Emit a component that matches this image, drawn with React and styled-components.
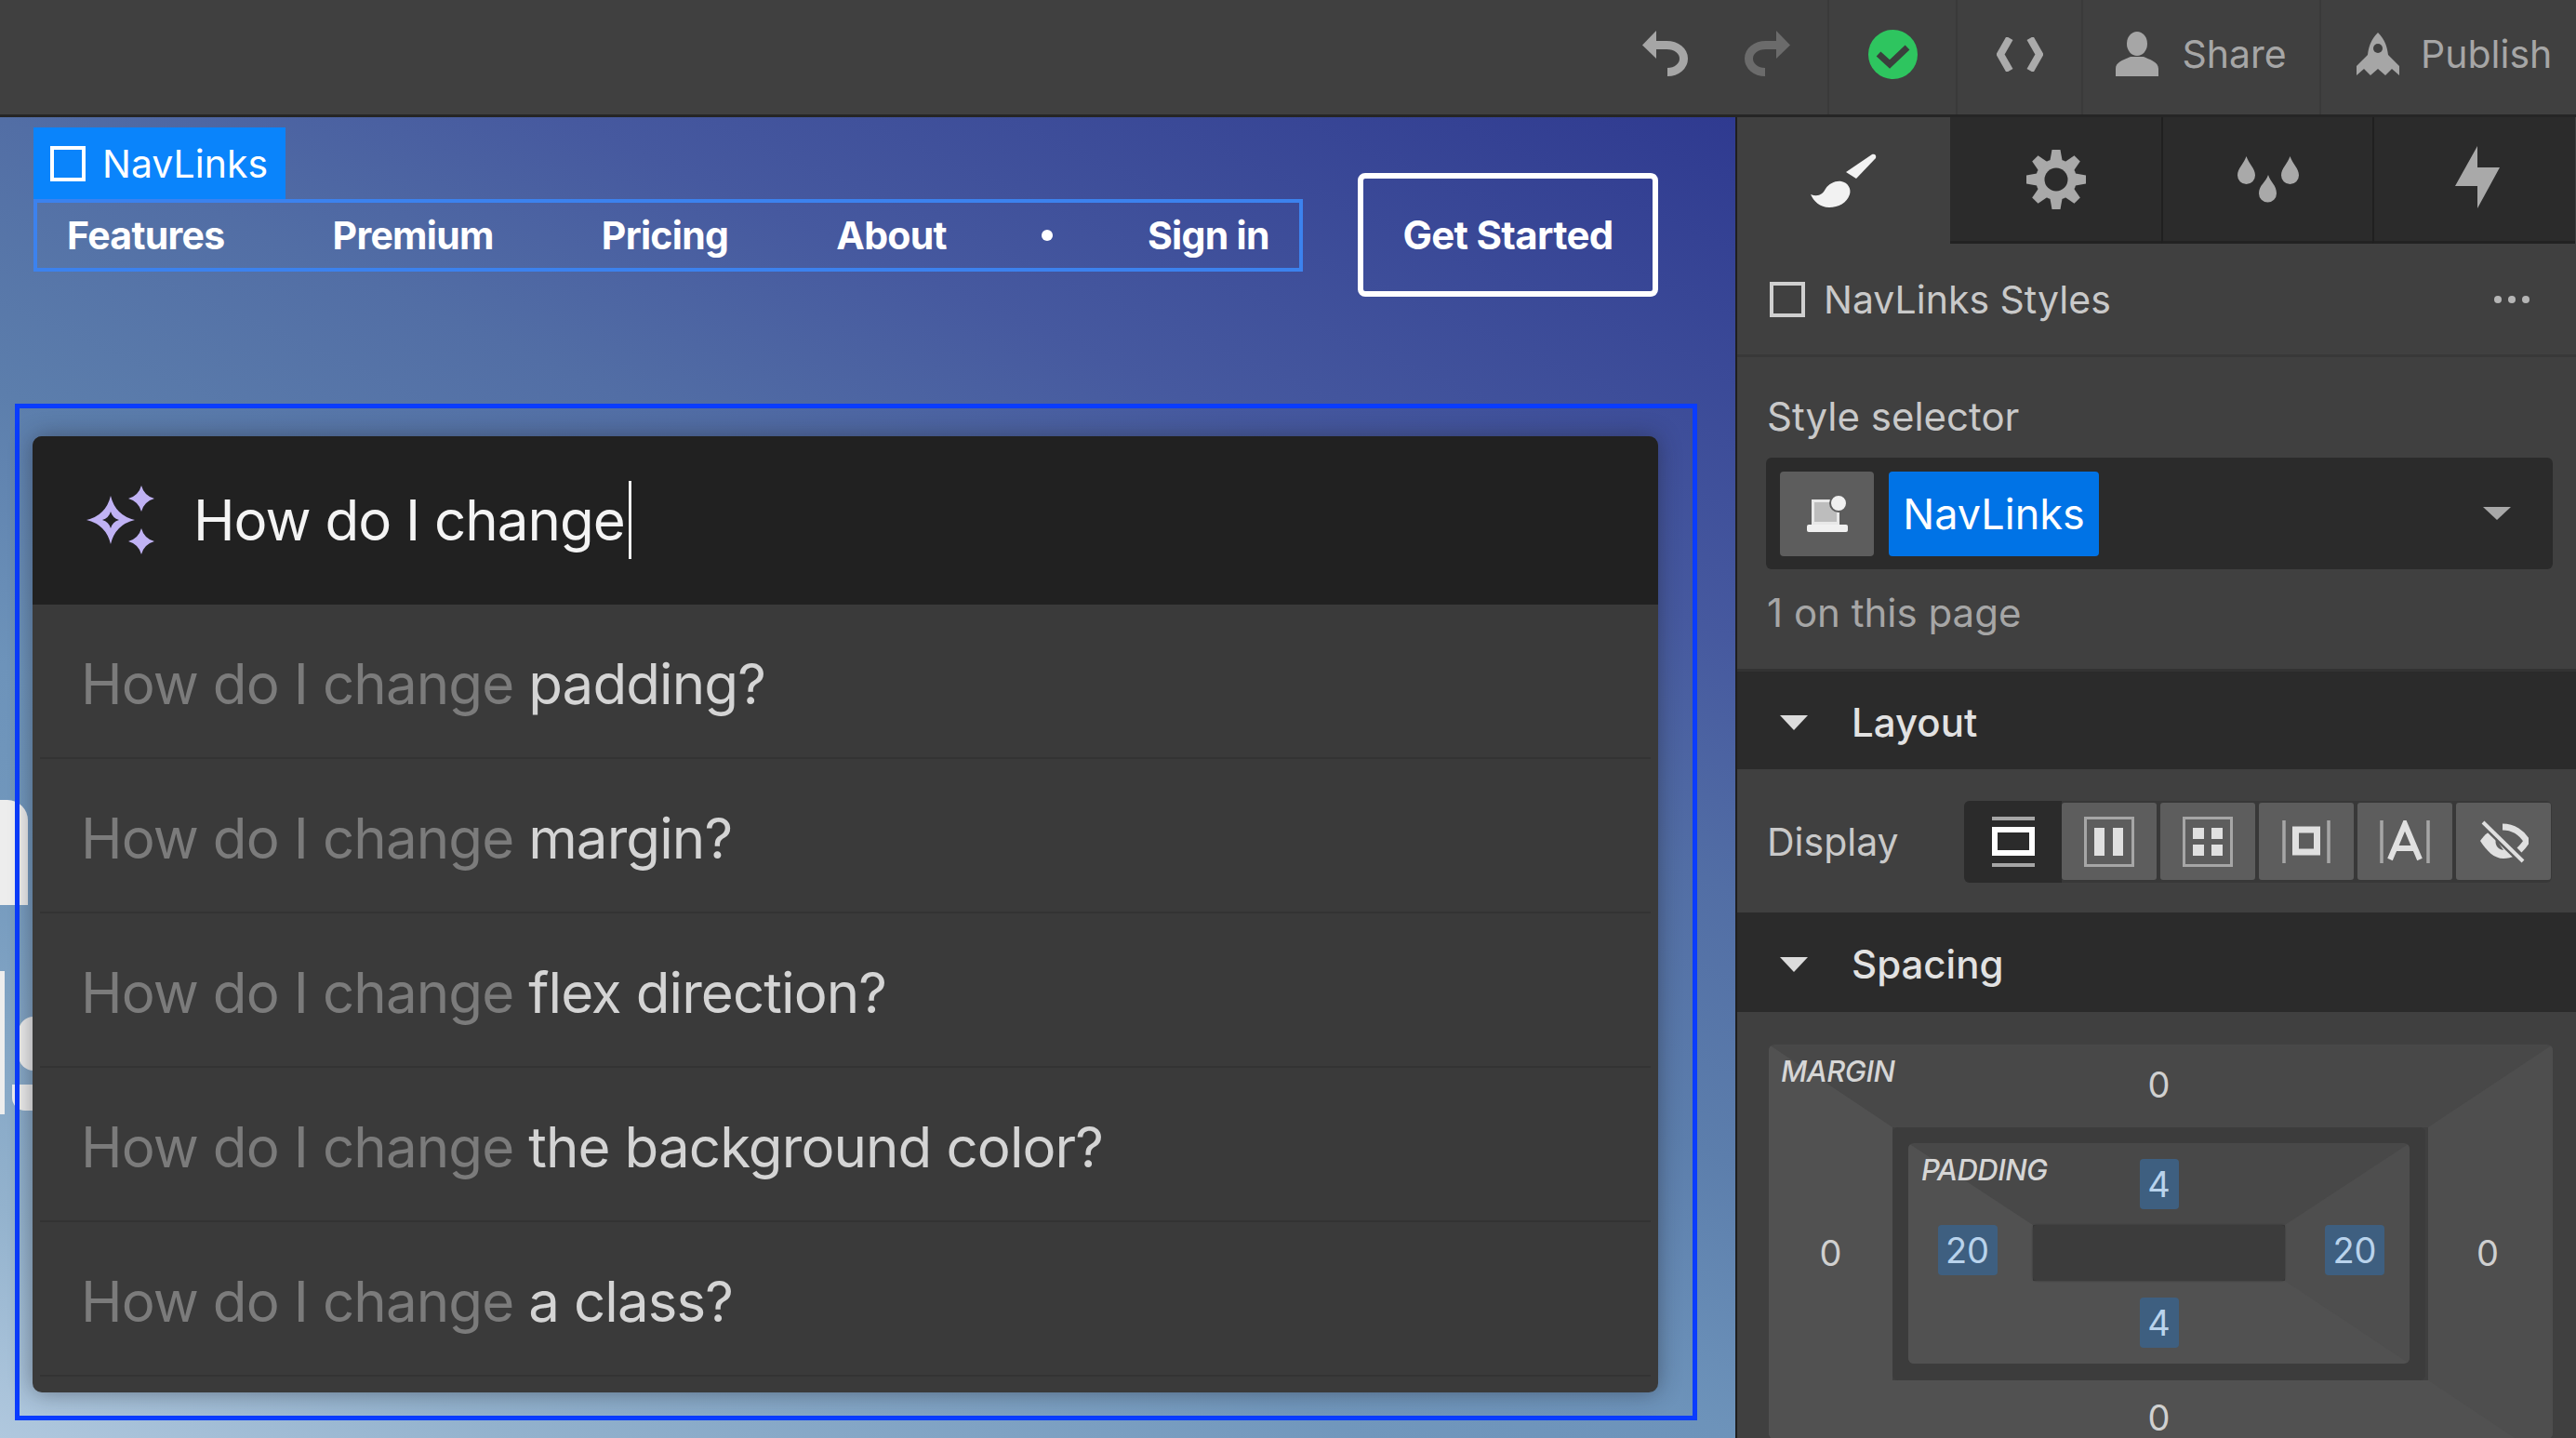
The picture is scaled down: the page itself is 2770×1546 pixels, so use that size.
import React from 'react'
import styled, {createGlobalStyle} from 'styled-components'

const GlobalStyle = createGlobalStyle`
	html, body {
		margin: 0;
		height: 100%;
		overflow: hidden;
		background: #404040;
	}
	* {
		box-sizing: border-box;
	}
`

const Page = styled.div`
	width: 2770px;
	height: 1546px;
	display: flex;
	flex-direction: column;
	overflow: hidden;
	font-family: Inter, 'Liberation Sans', sans-serif;
`

const TopBar = styled.header`
	flex: 0 0 126px;
	display: flex;
	justify-content: flex-end;
	background: #404040;
	border-bottom: 3px solid #252525;
	color: #a6a6a6;
	font-size: 41px;
`

const TopGroup = styled.div`
	display: flex;
	align-items: center;
	justify-content: ${p => p.$justify || 'center'};
	gap: ${p => p.$gap || 0}px;
	width: ${p => p.$width}px;
	padding: ${p => p.$padding || '0 0 7px'};
	border-left: ${p => (p.$plain ? 'none' : '2px solid #3a3a3a')};
`

const Main = styled.main`
	flex: 1;
	display: flex;
	min-height: 0;
`

const Canvas = styled.section`
	position: relative;
	flex: 0 0 1868px;
	display: flex;
	flex-direction: column;
	padding-left: 16px;
	overflow: hidden;
	background: linear-gradient(
		204deg,
		#2f3a90 0%,
		#46599f 25%,
		#526ea5 37%,
		#5c7eac 50%,
		#6d93ba 63%,
		#7197bc 71%,
		#93b2cd 89%,
		#b0c8de 100%
	);
	border-right: 2px solid #1f1f1f;
`

const HeroLetter = styled.span`
	position: absolute;
	left: ${p => p.$left}px;
	top: ${p => p.$top}px;
	width: ${p => p.$width}px;
	height: ${p => p.$height}px;
	background: #ededed;
	border-radius: ${p => p.$radius || '0'};
`

const NavRow = styled.div`
	flex: 0 0 308px;
	display: flex;
	align-items: flex-start;
	gap: 59px;
	padding: 60px 0 0 20px;
`

const NavBlock = styled.div`
	position: relative;
	margin-top: 28px;
`

const SelectedTag = styled.div`
	position: absolute;
	left: 0;
	bottom: 100%;
	display: flex;
	align-items: center;
	gap: 18px;
	width: 271px;
	height: 77px;
	padding-left: 18px;
	background: #0a84fb;
	color: #fff;
	font-size: 41px;
`

const TagBox = styled.span`
	flex: none;
	width: 38px;
	height: 38px;
	border: 4px solid #fff;
`

const NavLinks = styled.nav`
	display: flex;
	align-items: center;
	gap: 116px;
	width: 1365px;
	height: 78px;
	padding-left: 32px;
	border: 4px solid #3c82ee;
	color: #fff;
	font-size: 41px;
	font-weight: 700;
	letter-spacing: -0.7px;
`

const NavDot = styled.span`
	width: 12px;
	height: 12px;
	margin: 0 -14px;
	border-radius: 50%;
	background: #fff;
`

const GetStarted = styled.button`
	width: 323px;
	height: 133px;
	padding: 0;
	background: transparent;
	border: 6px solid #fff;
	border-radius: 8px;
	color: #fff;
	font: 700 42px Inter, sans-serif;
	letter-spacing: -0.7px;
`

const Selection = styled.div`
	position: relative;
	width: 1809px;
	height: 1093px;
	padding: 30px 37px 25px 14px;
	border: 5px solid #0a3cff;
`

const Dialog = styled.div`
	display: flex;
	flex-direction: column;
	height: 100%;
	border-radius: 10px;
	overflow: hidden;
	background: #3a3a3a;
	box-shadow: 0 0 24px rgba(30, 30, 40, 0.45);
`

const QueryRow = styled.div`
	flex: 0 0 181px;
	display: flex;
	align-items: center;
	gap: 41px;
	padding: 0 0 2px 56px;
	background: #212121;
	color: #f4f4f4;
	font-size: 60px;
	letter-spacing: -1px;
`

const Caret = styled.span`
	display: inline-block;
	width: 3px;
	height: 84px;
	margin-left: 4px;
	background: #f0f0f0;
`

const QueryText = styled.div`
	display: flex;
	align-items: center;
`

const Suggestion = styled.div`
	flex: 0 0 166px;
	display: flex;
	align-items: center;
	margin: 0 8px;
	padding: 5px 0 0 44px;
	border-bottom: 2px solid #333;
	color: #d4d4d4;
	font-size: 60px;
	letter-spacing: -0.9px;
`

const Typed = styled.span`
	color: #7b7b7b;
	white-space: pre;
`

const Panel = styled.aside`
	flex: 1;
	min-width: 0;
	display: flex;
	flex-direction: column;
	background: #404040;
	color: #cfcfcf;
	font-size: 41px;
	overflow: hidden;
`

const Tabs = styled.div`
	flex: 0 0 136px;
	display: flex;
`

const Tab = styled.div`
	flex: 0 0 ${p => p.$width}px;
	display: flex;
	align-items: center;
	justify-content: center;
	padding: ${p => p.$padding || '0'};
	background: ${p => (p.$active ? '#404040' : '#2b2b2b')};
	border-bottom: ${p => (p.$active ? 'none' : '3px solid #222')};
	border-left: ${p => (p.$divider ? '2px solid #202020' : 'none')};
`

const PanelHeader = styled.div`
	flex: 0 0 122px;
	display: flex;
	align-items: center;
	gap: 20px;
	padding: 0 50px 0 35px;
	border-bottom: 3px solid #383838;
`

const HeaderBox = styled.span`
	flex: none;
	width: 38px;
	height: 38px;
	border: 4px solid #cfcfcf;
`

const HeaderTitle = styled.div`
	flex: 1;
	color: #c9c9c9;
`

const Dots = styled.div`
	display: flex;
	gap: 7px;
`

const Dot = styled.span`
	width: 8px;
	height: 8px;
	border-radius: 50%;
	background: #b5b5b5;
`

const SelectorSection = styled.div`
	flex: 0 0 338px;
	padding: 40px 25px 0 32px;
	border-bottom: 3px solid #333;
`

const SelectorBoxWrap = styled.div`
	margin: 20px 0 23px -1px;
`

const Label = styled.div`
	color: ${p => p.$color || '#c9c9c9'};
	font-size: ${p => p.$size || 41}px;
	line-height: 48px;
`

const SelectorBox = styled.div`
	display: flex;
	align-items: center;
	gap: 16px;
	height: 120px;
	padding: 0 25px 0 15px;
	border-radius: 6px;
	background: #2b2b2b;
`

const BreakpointButton = styled.div`
	flex: 0 0 101px;
	height: 91px;
	display: flex;
	align-items: center;
	justify-content: center;
	border-radius: 4px;
	background: #5d5d5d;
`

const ClassChip = styled.div`
	flex: 0 0 226px;
	height: 91px;
	display: flex;
	align-items: center;
	justify-content: center;
	border-radius: 4px;
	background: #0073e6;
	color: #fff;
	font-size: 45px;
`

const SelectCaret = styled.span`
	margin-left: auto;
	margin-right: 20px;
	width: 0;
	height: 0;
	border-left: 15px solid transparent;
	border-right: 15px solid transparent;
	border-top: 14px solid #a8a8a8;
`

const SectionBar = styled.div`
	flex: 0 0 ${p => p.$height}px;
	display: flex;
	align-items: center;
	gap: 47px;
	padding: 4px 0 0 46px;
	background: #2b2b2b;
	color: #e2e2e2;
	font-size: 42px;
	font-weight: 500;
`

const SectionCaret = styled.span`
	width: 0;
	height: 0;
	border-left: 15px solid transparent;
	border-right: 15px solid transparent;
	border-top: 16px solid #dcdcdc;
`

const DisplayRow = styled.div`
	flex: 0 0 154px;
	display: flex;
	align-items: center;
	justify-content: space-between;
	padding: 1px 26px 0 32px;
`

const Segments = styled.div`
	display: flex;
	align-items: center;
	gap: 4px;
	height: 88px;
	padding-right: 1px;
	border-radius: 6px;
	background: #383838;
`

const Segment = styled.div`
	width: ${p => (p.$active ? 105 : 102)}px;
	height: ${p => (p.$active ? 88 : 83)}px;
	margin-right: ${p => (p.$active ? -4 : 0)}px;
	display: flex;
	align-items: center;
	justify-content: center;
	background: ${p => (p.$active ? '#2b2b2b' : '#5d5d5d')};
	border-radius: ${p => (p.$active ? '6px 0 0 6px' : '3px')};
`

const SpacingWrap = styled.div`
	flex: 1;
	padding: 35px 25px 0 34px;
	min-height: 0;
`

// the margin box runs past the bottom of the window, $overhang keeps its mitred edges right
const BoxGrid = styled.div`
	position: relative;
	display: grid;
	grid-template-columns: ${p => p.$cols};
	grid-template-rows: ${p => p.$rows};
	border-radius: 6px;
	overflow: hidden;
	&::before {
		content: '';
		position: absolute;
		inset: 0 0 ${p => -(p.$overhang || 0)}px 0;
		border-style: solid;
		border-width: ${p => p.$borders};
		border-color: #484848 #4e4e4e #515151 #515151;
	}
`

const Cell = styled.div`
	position: relative;
	display: flex;
	align-items: ${p => p.$align || 'center'};
	justify-content: center;
	grid-column: ${p => p.$col};
	grid-row: ${p => p.$row};
	color: #d0d0d0;
`

const ZeroValue = styled(Cell)`
	padding: ${p => p.$top || 0}px 0 3px;
	font-size: 38px;
	line-height: 30px;
`

const BoxLabel = styled.div`
	position: relative;
	grid-column: 1;
	grid-row: 1;
	padding: ${p => p.$padding};
	color: #d6d6d6;
	font-size: 31px;
	font-style: italic;
	font-weight: 500;
	letter-spacing: -0.5px;
	white-space: nowrap;
`

const PaddingFrame = styled.div`
	position: relative;
	grid-column: 2;
	grid-row: 2;
	padding: 17px;
	border-radius: 6px;
	background: #3c3c3c;
`

const ContentBox = styled.div`
	grid-column: 2;
	grid-row: 2;
	position: relative;
	border-radius: 4px;
	background: #3c3c3c;
	box-shadow: 0 0 2px #2e2e2e;
`

const ValueChip = styled.span`
	display: flex;
	align-items: center;
	justify-content: center;
	min-width: ${p => p.$width}px;
	height: 54px;
	margin: ${p => p.$margin || '0'};
	border-radius: 4px;
	background: #3e5f80;
	color: #b9d3ec;
	font-size: 38px;
`

const icons = {
	undo: (
		<svg width="50" height="50" viewBox="0 0 50 50" fill="none" stroke="currentColor" strokeWidth="9">
			<path d="M0 15.5 L15 0 V30 Z" fill="currentColor" stroke="none" />
			<path d="M12 15.5 H26 C37 15.5 44.5 22 44.5 30 C44.5 38 37 44.5 27 44.5" />
		</svg>
	),
	redo: (
		<svg width="50" height="50" viewBox="0 0 50 50" fill="none" stroke="#6b6b6b" strokeWidth="9">
			<path d="M50 15.5 L35 0 V30 Z" fill="#6b6b6b" stroke="none" />
			<path d="M38 15.5 H24 C13 15.5 5.5 22 5.5 30 C5.5 38 13 44.5 23 44.5" />
		</svg>
	),
	check: (
		<svg width="53" height="53" viewBox="0 0 53 53">
			<circle cx="26.5" cy="26.5" r="26.5" fill="#2ec55f" />
			<path d="M11 26 L23 37 L42 19" fill="none" stroke="#3a3f3c" strokeWidth="7" />
		</svg>
	),
	code: (
		<svg width="50" height="37" viewBox="0 0 50 37" fill="none" stroke="#ababab" strokeWidth="8">
			<path d="M14 1 L4 18.5 L14 36" />
			<path d="M36 1 L46 18.5 L36 36" />
		</svg>
	),
	person: (
		<svg width="46" height="48" viewBox="0 0 46 48" fill="currentColor">
			<ellipse cx="23" cy="13" rx="11" ry="13" />
			<path d="M0 48 V40 C0 32 10 30 16 27 H30 C36 30 46 32 46 40 V48 Z" />
		</svg>
	),
	rocket: (
		<svg width="46" height="46" viewBox="0 0 46 46" fill="currentColor">
			<path d="M23 0 C31 8 33 16 34 24 L46 36 V46 L38 39 L31 46 L23 39 L15 46 L8 39 L0 46 V36 L12 24 C13 16 15 8 23 0 Z" />
			<circle cx="23" cy="17" r="5" fill="#404040" />
		</svg>
	),
	brush: (
		<svg width="71" height="58" viewBox="0 0 71 58" fill="#f2f2f2">
			<path d="M66 1 C69 0 71 2 70 5 L49 27 L38 20 Z" />
			<path d="M33 30 C40 31 44 38 42 44 C39 53 30 58 20 58 C10 58 3 51 0 44 C8 47 13 44 16 38 C20 32 27 29 33 30 Z" />
		</svg>
	),
	gear: (
		<svg width="64" height="64" viewBox="0 0 64 64">
			<g fill="#a9a9a9">
				<circle cx="32" cy="32" r="22" />
				{[0, 45, 90, 135, 180, 225, 270, 315].map(a => (
					<path key={a} d="M27.5 0 H36.5 L39 14 H25 Z" transform={`rotate(${a} 32 32)`} />
				))}
			</g>
			<circle cx="32" cy="32" r="12.5" fill="#2b2b2b" />
		</svg>
	),
	drops: (
		<svg width="66" height="50" viewBox="0 0 66 50" fill="#a9a9a9">
			<path d="M9.5 0 C12 8 19 13 19 20.5 A9.5 9.5 0 0 1 0 20.5 C0 13 7 8 9.5 0 Z" />
			<path d="M56.5 0 C59 8 66 13 66 20.5 A9.5 9.5 0 0 1 47 20.5 C47 13 54 8 56.5 0 Z" />
			<path d="M33 20 C35.5 28 42 31 42 40 A9.5 9.5 0 0 1 23 40 C23 31 30.5 28 33 20 Z" />
		</svg>
	),
	bolt: (
		<svg width="48" height="67" viewBox="0 0 48 67" fill="#a9a9a9">
			<path d="M24 0 V23 H48 L24 67 V43 H0 Z" />
		</svg>
	),
	breakpoint: (
		<svg width="44" height="40" viewBox="0 0 44 40">
			<rect x="6.5" y="6.5" width="27" height="24" fill="#bdbdbd" stroke="#e8e8e8" strokeWidth="3" />
			<rect x="0" y="32" width="44" height="8" rx="2" fill="#f0f0f0" />
			<circle cx="34" cy="9" r="9" fill="#f0f0f0" stroke="#5d5d5d" strokeWidth="2" />
		</svg>
	),
	block: (
		<svg width="46" height="54" viewBox="0 0 46 54">
			<path d="M0 2 H46 M0 52 H46" stroke="#a6a6a6" strokeWidth="4" />
			<rect x="3" y="14" width="40" height="25" fill="none" stroke="#fff" strokeWidth="6" />
		</svg>
	),
	flex: (
		<svg width="54" height="54" viewBox="0 0 54 54" fill="#e0e0e0">
			<rect x="1.5" y="1.5" width="51" height="51" fill="none" stroke="#a6a6a6" strokeWidth="3" />
			<rect x="11" y="12" width="11" height="30" />
			<rect x="31" y="12" width="11" height="30" />
		</svg>
	),
	grid: (
		<svg width="54" height="54" viewBox="0 0 54 54" fill="#e0e0e0">
			<rect x="1.5" y="1.5" width="51" height="51" fill="none" stroke="#a6a6a6" strokeWidth="3" />
			<rect x="11" y="12" width="12" height="12" />
			<rect x="31" y="12" width="12" height="12" />
			<rect x="11" y="30" width="12" height="12" />
			<rect x="31" y="30" width="12" height="12" />
		</svg>
	),
	inlineBlock: (
		<svg width="52" height="46" viewBox="0 0 52 46">
			<path d="M2 0 V46 M50 0 V46" stroke="#a6a6a6" strokeWidth="3.5" />
			<rect x="14.5" y="10" width="23" height="24" fill="none" stroke="#e0e0e0" strokeWidth="7" />
		</svg>
	),
	inlineText: (
		<svg width="54" height="46" viewBox="0 0 54 46" fill="none">
			<path d="M2 0 V46 M52 0 V46" stroke="#a6a6a6" strokeWidth="3.5" />
			<path d="M11 42 L27 4 L43 42 M16 30 H38" stroke="#e0e0e0" strokeWidth="6" />
		</svg>
	),
	hidden: (
		<svg width="54" height="46" viewBox="0 0 54 46" fill="none">
			<path d="M2 22 C7 15 12 11 17 9 L40 38 C36 40 31 41 27 41 C17 41 9 33 2 22 Z" fill="#e0e0e0" />
			<path d="M19 20 A9 9 0 0 0 27 32 Z" fill="#5d5d5d" />
			<path d="M26 7 C38 7 47 14 52 22 C50 26 47 29 44 32" stroke="#e0e0e0" strokeWidth="7" />
			<path d="M5 2 L48 44" stroke="#5d5d5d" strokeWidth="9" />
			<path d="M5 2 L48 44" stroke="#e0e0e0" strokeWidth="4" />
		</svg>
	),
	sparkle: (
		<svg width="76" height="76" viewBox="0 0 76 76" fill="#c0b2f4">
			<path
				fillRule="evenodd"
				d="M28 12 Q33 33 54 38 Q33 43 28 64 Q23 43 2 38 Q23 33 28 12 Z M28 29 Q30 36 37 38 Q30 40 28 47 Q26 40 19 38 Q26 36 28 29 Z"
			/>
			<path d="M61 1 Q64 12 75 15 Q64 18 61 29 Q58 18 47 15 Q58 12 61 1 Z" />
			<path d="M61 47 Q64 58 75 61 Q64 64 61 75 Q58 64 47 61 Q58 58 61 47 Z" />
		</svg>
	),
}

const suggestions = ['padding?', 'margin?', 'flex direction?', 'the background color?', 'a class?']
const navItems = ['Features', 'Premium', 'Pricing', 'About']
const displayIcons = ['flex', 'grid', 'inlineBlock', 'inlineText', 'hidden']

function App() {
	return (
		<Page>
			<GlobalStyle />
			<TopBar>
				<TopGroup $plain $width={240} $gap={59}>
					{icons.undo}
					{icons.redo}
				</TopGroup>
				<TopGroup $width={138}>{icons.check}</TopGroup>
				<TopGroup $width={135}>{icons.code}</TopGroup>
				<TopGroup $width={256} $gap={25}>
					{icons.person}
					Share
				</TopGroup>
				<TopGroup $width={276} $gap={23} $justify="flex-start" $padding="0 0 7px 38px">
					{icons.rocket}
					Publish
				</TopGroup>
			</TopBar>
			<Main>
				<Canvas>
					<HeroLetter $left={0} $top={734} $width={30} $height={113} $radius="0 22px 0 0" />
					<HeroLetter $left={0} $top={918} $width={5} $height={154} />
					<HeroLetter $left={20} $top={967} $width={16} $height={58} $radius="16px 0 0 16px" />
					<HeroLetter $left={13} $top={1040} $width={23} $height={28} $radius="0 0 0 14px" />
					<NavRow>
						<NavBlock>
							<SelectedTag>
								<TagBox />
								NavLinks
							</SelectedTag>
							<NavLinks>
								{navItems.map(item => (
									<span key={item}>{item}</span>
								))}
								<NavDot />
								<span>Sign in</span>
							</NavLinks>
						</NavBlock>
						<GetStarted>Get Started</GetStarted>
					</NavRow>
					<Selection>
						<Dialog>
							<QueryRow>
								{icons.sparkle}
								<QueryText>
									How do I change
									<Caret />
								</QueryText>
							</QueryRow>
							{suggestions.map(text => (
								<Suggestion key={text}>
									<Typed>How do I change </Typed>
									{text}
								</Suggestion>
							))}
						</Dialog>
					</Selection>
				</Canvas>
				<Panel>
					<Tabs>
						<Tab $active $width={229}>
							{icons.brush}
						</Tab>
						<Tab $width={227}>{icons.gear}</Tab>
						<Tab $width={227} $divider>
							{icons.drops}
						</Tab>
						<Tab $width={218} $divider $padding="0 0 4px 6px">
							{icons.bolt}
						</Tab>
					</Tabs>
					<PanelHeader>
						<HeaderBox />
						<HeaderTitle>NavLinks Styles</HeaderTitle>
						<Dots>
							<Dot />
							<Dot />
							<Dot />
						</Dots>
					</PanelHeader>
					<SelectorSection>
						<Label $size={42}>Style selector</Label>
						<SelectorBoxWrap>
							<SelectorBox>
								<BreakpointButton>{icons.breakpoint}</BreakpointButton>
								<ClassChip>NavLinks</ClassChip>
								<SelectCaret />
							</SelectorBox>
						</SelectorBoxWrap>
						<Label $color="#a6a6a6" $size={42}>
							1 on this page
						</Label>
					</SelectorSection>
					<SectionBar $height={105}>
						<SectionCaret />
						Layout
					</SectionBar>
					<DisplayRow>
						<Label>Display</Label>
						<Segments>
							<Segment $active>{icons.block}</Segment>
							{displayIcons.map(name => (
								<Segment key={name}>{icons[name]}</Segment>
							))}
						</Segments>
					</DisplayRow>
					<SectionBar $height={107}>
						<SectionCaret />
						Spacing
					</SectionBar>
					<SpacingWrap>
						<BoxGrid
							$cols="133px 573px 134px"
							$rows="89px 272px 63px"
							$borders="89px 134px 89px 133px"
							$overhang={26}
						>
							<BoxLabel $padding="10px 0 0 13px">MARGIN</BoxLabel>
							<ZeroValue $col={2} $row={1}>
								0
							</ZeroValue>
							<ZeroValue $col={1} $row={2}>
								0
							</ZeroValue>
							<ZeroValue $col={3} $row={2}>
								0
							</ZeroValue>
							<ZeroValue $col={2} $row={3} $top={20}>
								0
							</ZeroValue>
							<PaddingFrame>
								<BoxGrid $cols="134px 271px 134px" $rows="88px 60px 89px" $borders="88px 134px 89px 134px">
									<BoxLabel $padding="10px 0 0 14px">PADDING</BoxLabel>
									<Cell $col={2} $row={1}>
										<ValueChip $width={42}>4</ValueChip>
									</Cell>
									<Cell $col={1} $row={2} $align="flex-start">
										<ValueChip $width={64} $margin="0 7px 0 0">
											20
										</ValueChip>
									</Cell>
									<ContentBox />
									<Cell $col={3} $row={2} $align="flex-start">
										<ValueChip $width={64} $margin="0 0 0 16px">
											20
										</ValueChip>
									</Cell>
									<Cell $col={2} $row={3}>
										<ValueChip $width={42}>4</ValueChip>
									</Cell>
								</BoxGrid>
							</PaddingFrame>
						</BoxGrid>
					</SpacingWrap>
				</Panel>
			</Main>
		</Page>
	)
}

export default App
